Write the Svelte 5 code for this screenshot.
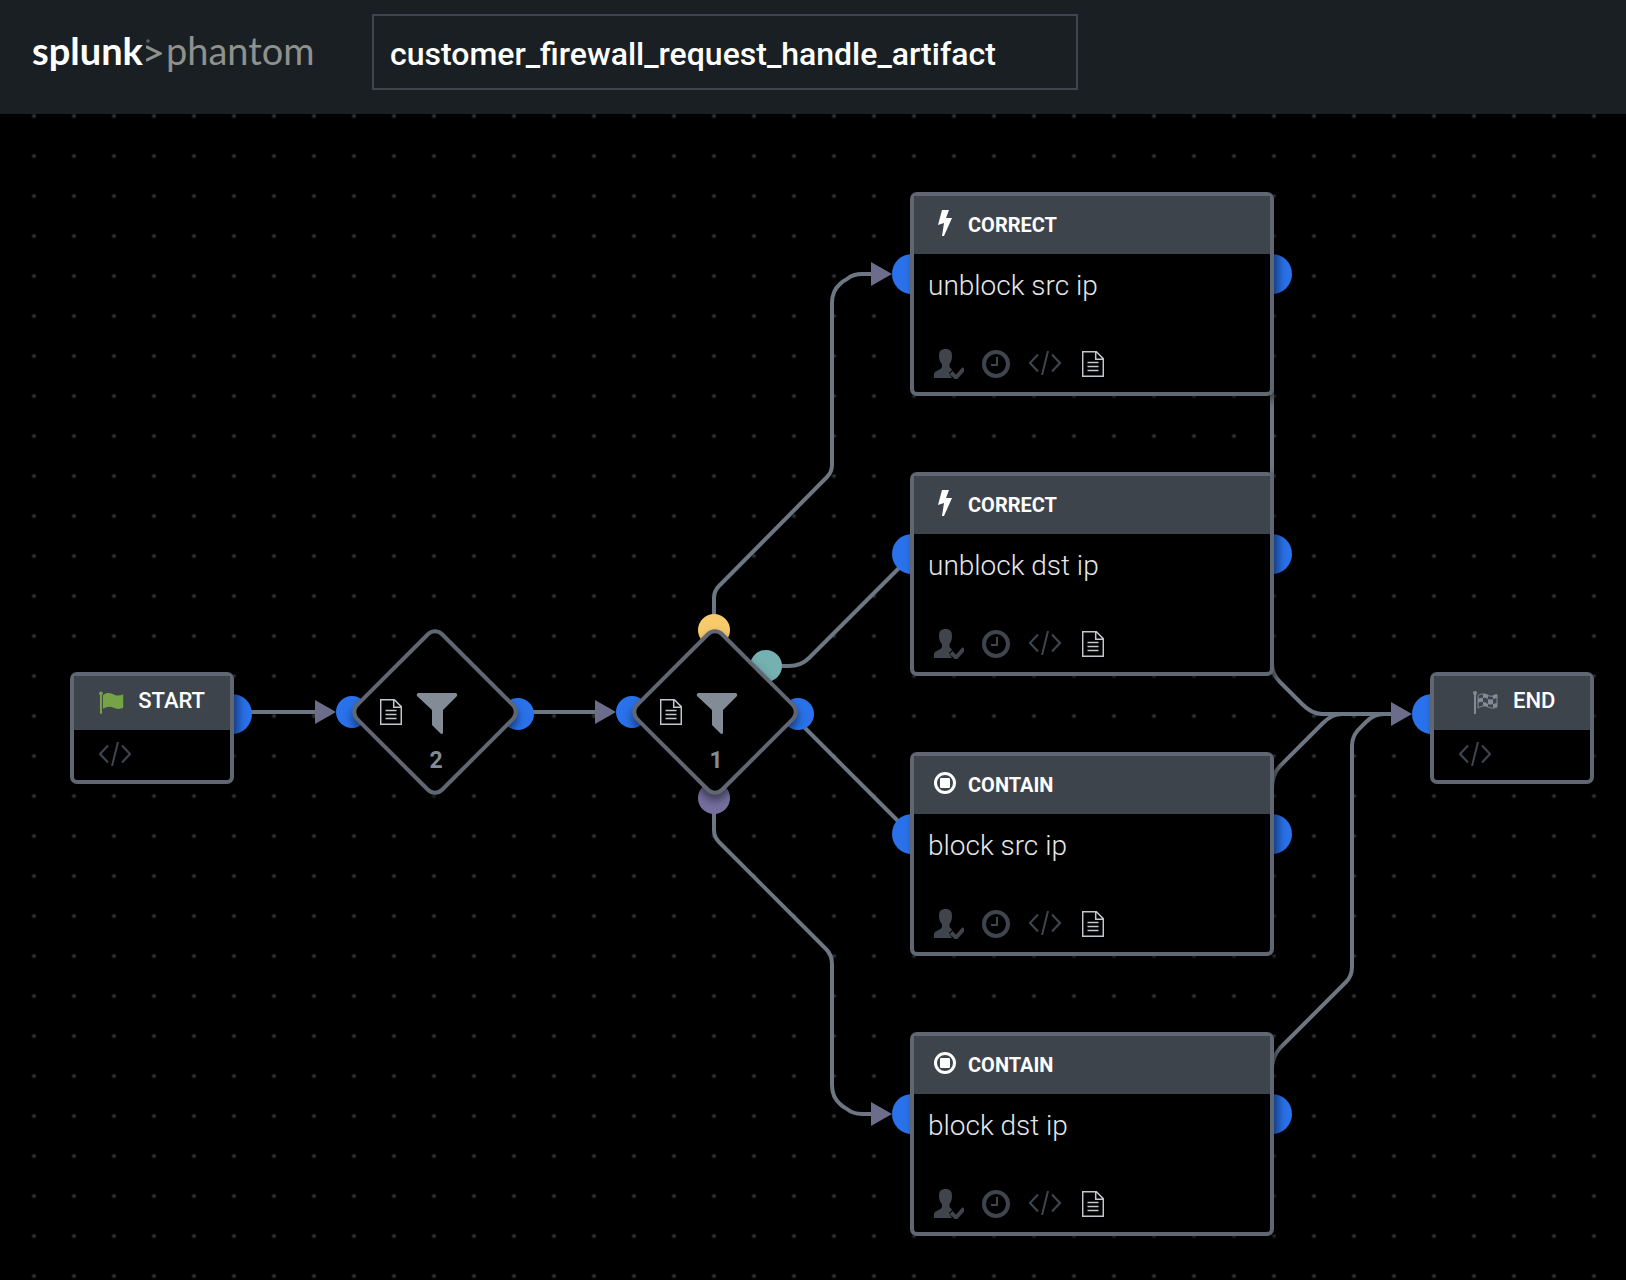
<script>
  const cards = [
    { top: 78, kind: 'CORRECT', text: 'unblock src ip', icon: 'bolt' },
    { top: 358, kind: 'CORRECT', text: 'unblock dst ip', icon: 'bolt' },
    { top: 638, kind: 'CONTAIN', text: 'block src ip', icon: 'stop' },
    { top: 918, kind: 'CONTAIN', text: 'block dst ip', icon: 'stop' }
  ];
  const filters = [
    { left: 373, label: '2' },
    { left: 653, label: '1' }
  ];
  const ports = [
    { x: 232, y: 600, r: 20, c: 'blue' },
    { x: 352, y: 598, r: 16, c: 'blue' },
    { x: 518, y: 600, r: 16, c: 'blue' },
    { x: 632, y: 598, r: 16, c: 'blue' },
    { x: 798, y: 600, r: 16, c: 'blue' },
    { x: 714, y: 516, r: 16, c: 'yellow' },
    { x: 766, y: 552, r: 16, c: 'teal' },
    { x: 714, y: 684, r: 16, c: 'purple' },
    { x: 1432, y: 600, r: 20, c: 'blue' },
    ...cards.flatMap((k) => [
      { x: 912, y: k.top + 82, r: 20, c: 'blue' },
      { x: 1272, y: k.top + 82, r: 20, c: 'blue' }
    ])
  ];
  const edges = [
    'M232 598H320',
    'M518 598H600',
    'M714 516V484Q714 477 719 472L827 363Q832 358 832 351V189Q832 177 840 170Q843 167 847 165Q853 160 862 160H876',
    'M766 552H789Q801 552 809 544L912 441',
    'M798 607L912 721',
    'M714 684V716Q714 723 719 728L826 835Q832 841 832 850V971Q832 983 840 990Q843 993 847 995Q853 1000 862 1000H876',
    'M1272 160V550Q1272 560 1280 568L1302 590Q1312 600 1322 600H1396',
    'M1272 680Q1271 661 1280 652L1323 609Q1332 600 1342 600',
    'M1272 960Q1271 944 1280 934L1346 868Q1352 862 1352 853V632Q1352 623 1358 616L1366 608Q1374 600 1384 600'
  ];
  const arrows = [
    [336, 598],
    [616, 598],
    [892, 160],
    [892, 1000],
    [1412, 600]
  ];
</script>

{#snippet code()}
  <svg class="code" width="32" height="24" viewBox="0 0 32 24" aria-hidden="true">
    <path d="M9 3.500 1 12l8 8.500M23 3.500l8 8.500-8 8.500M19 0l-6 24" />
  </svg>
{/snippet}

{#snippet doc()}
  <svg class="doc" width="22" height="26" viewBox="0 0 22 26" aria-hidden="true">
    <path d="M.7.7h13.6l7 7v17.6H.7zM13.7.7v7.6h7.6M5.500 11.500h11M5.500 15.500h11M5.500 19.500h11" />
  </svg>
{/snippet}

<div class="app">
  <header>
    <a class="logo" href="#home"><b>splunk</b><svg width="16" height="26" viewBox="0 0 16 26" aria-hidden="true"><path d="M0 9.500 14 16.500 0 23.500" /><circle cx="2" cy="4" r="1.800" /></svg><span>phantom</span></a>
    <input aria-label="Playbook name" value="customer_firewall_request_handle_artifact" spellcheck="false" />
  </header>

  <main>
    <svg class="wires" aria-hidden="true">
      {#each edges as d}<path {d} />{/each}
      {#each ports as p}<circle class={p.c} cx={p.x} cy={p.y} r={p.r} />{/each}
      {#each arrows as [x, y]}<polygon points="{x},{y} {x - 21},{y - 12} {x - 21},{y + 12}" />{/each}
    </svg>

    <section class="node terminal start">
      <h2>
        <svg width="26" height="24" viewBox="0 0 26 24" aria-hidden="true">
          <circle cx="2" cy="2" r="2" /><path d="M1 3h2v20H1zM4 4C9 0 13 2 17 4q4 1 8-1v14c-4 2-7 1-10 0-4-2-7-1-11 1z" />
        </svg>
        START
      </h2>
      <div class="body">{@render code()}</div>
    </section>

    {#each filters as f}
      <section class="filter" style:left="{f.left}px">
        <div class="diamond"></div>
        <div class="inner">
          {@render doc()}
          <svg class="funnel" width="42" height="42" viewBox="0 0 42 42" aria-hidden="true">
            <path d="M2 0h38q2 1 1 3L27 17v23q-1 2-3 0l-8-8V17L1 3Q0 1 2 0z" />
          </svg>
          <strong>{f.label}</strong>
        </div>
      </section>
    {/each}

    {#each cards as card}
      <section class="node card" style:top="{card.top}px">
        <h2>
          {#if card.icon === 'bolt'}
            <svg width="22" height="26" viewBox="0 0 22 26" aria-hidden="true"><path d="M8 0h7l-3 8h6L10 26H8l2-13-6 2z" /></svg>
          {:else}
            <svg width="22" height="22" viewBox="0 0 22 22" aria-hidden="true"><circle class="ring" cx="11" cy="11" r="9.500" /><rect x="6" y="6" width="10" height="10" rx="1" /></svg>
          {/if}
          {card.kind}
        </h2>
        <p>{card.text}</p>
        <div class="tools">
          <svg class="user" width="30" height="30" viewBox="0 0 30 30" aria-hidden="true">
            <path d="M5 7C5 2 7 0 11.500 0S18 2 18 7c0 4-1 6-2.500 8v3c1 1 2.500 2 2.500 3l-3 3 3 5H0v-4c0-3 7-4 8-7v-3C6 13 5 11 5 7z" />
            <path class="tick" d="M17 23.500l5 5 8-9" />
          </svg>
          <svg class="clock" width="28" height="28" viewBox="0 0 28 28" aria-hidden="true">
            <circle cx="14" cy="14" r="12" /><path d="M15 7v8H9" />
          </svg>
          {@render code()}
          {@render doc()}
        </div>
      </section>
    {/each}

    <section class="node terminal end">
      <h2>
        <svg width="26" height="24" viewBox="0 0 26 24" aria-hidden="true">
          <circle cx="2" cy="2" r="2" /><path d="M1 3h2v20H1z" />
          <path class="flag" d="M5 4.500c5-3 8-1 11 .5q4 1 8-1v12c-4 2-6 1-9 0-4-2-6-1-10 1z" />
          <path d="M10 3q3-1 5 1v4q-3-2-5-1zM5 8q3-2 5-1v4q-2-1-5 1zM15 8q3 1 5 0v5q-3 1-5 0zM10 11q3 0 5 2v3q-3-2-5-1zM20 4l4-1v4l-4 1zM20 13l4-1v4l-4 1z" />
        </svg>
        END
      </h2>
      <div class="body">{@render code()}</div>
    </section>
  </main>
</div>

<style>
  :global(body) {
    margin: 0;
    background: #000;
  }
  .app {
    display: flex;
    flex-direction: column;
    min-height: 100vh;
    font-family: Roboto, sans-serif;
    color: #fff;
  }
  header {
    display: flex;
    align-items: flex-start;
    box-sizing: border-box;
    height: 114px;
    padding: 14px 32px;
    background: #1a1f23;
  }
  .logo {
    display: flex;
    align-items: center;
    width: 340px;
    height: 72px;
    color: #fff;
    font: 38px/44px Lato, sans-serif;
    text-decoration: none;
  }
  .logo span {
    color: #8f918d;
  }
  .logo svg {
    margin: 0 4px 0 3px;
    fill: #5b5f61;
  }
  .logo path {
    fill: none;
    stroke: #8f918d;
    stroke-width: 3;
  }
  input {
    box-sizing: border-box;
    flex: 0 1 706px;
    min-width: 0;
    height: 76px;
    padding: 4px 16px 0;
    border: 2px solid #3f444d;
    border-radius: 0;
    background: transparent;
    color: #fff;
    font: 500 32px/40px Roboto, sans-serif;
    outline: none;
  }
  main {
    position: relative;
    flex: 1;
    min-height: 1166px;
    overflow: hidden;
    background:
      radial-gradient(circle at 34px 2px, #393c3f 0, #2a2d2f 1px, transparent 3px) 0 0 / 40px 40px,
      #000;
  }
  .wires {
    position: absolute;
    inset: 0;
    width: 100%;
    height: 100%;
  }
  .wires path {
    fill: none;
    stroke: #6c7783;
    stroke-width: 4;
  }
  .wires polygon {
    fill: #6c6d8a;
  }
  .blue {
    fill: #2a72eb;
  }
  .yellow {
    fill: #f7cb6c;
  }
  .teal {
    fill: #75b1b1;
  }
  .purple {
    fill: #7670a0;
  }
  .node {
    position: absolute;
    box-sizing: border-box;
    border: 4px solid #606773;
    border-radius: 7px;
    background: #000;
    box-shadow: 4px 4px 10px rgba(0, 0, 0, 0.5);
  }
  h2 {
    display: flex;
    align-items: center;
    box-sizing: border-box;
    margin: 0;
    background: #3e444c;
    fill: #fff;
  }
  .card {
    left: 910px;
    width: 364px;
    height: 204px;
  }
  .card h2 {
    gap: 12px;
    height: 58px;
    padding: 0 20px;
    font-size: 20px;
    font-weight: 700;
  }
  .card h2 svg {
    margin-bottom: 4px;
  }
  .ring {
    fill: none;
    stroke: #fff;
    stroke-width: 3;
  }
  p {
    margin: 0;
    padding: 15px 14px 0;
    color: #e6e7ea;
    font-size: 28px;
    font-weight: 300;
    line-height: 34px;
  }
  .tools {
    display: flex;
    align-items: center;
    height: 30px;
    margin-top: 46px;
    padding-left: 20px;
  }
  .tools .clock {
    margin: 0 19px 0 18px;
  }
  .tools .code {
    margin-bottom: 3px;
  }
  .tools .doc {
    margin-left: 21px;
  }
  .user {
    fill: #3f444d;
  }
  .tick {
    fill: none;
    stroke: #3f444d;
    stroke-width: 4;
  }
  .clock {
    fill: none;
    stroke: #3f444d;
    stroke-width: 4;
  }
  .clock path {
    stroke-width: 2;
  }
  .code {
    fill: none;
    stroke: #40464e;
    stroke-width: 2;
  }
  .doc {
    fill: none;
    stroke: #c3c7ce;
    stroke-width: 1.500;
  }
  .terminal {
    top: 558px;
    width: 164px;
    height: 112px;
  }
  .terminal h2 {
    gap: 14px;
    height: 54px;
    padding: 0 25px 5px;
    font-size: 22px;
    font-weight: 500;
  }
  .terminal h2 svg {
    margin-top: 4px;
  }
  .body {
    padding: 12px 25px;
  }
  .start {
    left: 70px;
  }
  .start svg {
    fill: #74a446;
  }
  .end {
    left: 1430px;
  }
  .end h2 {
    padding-left: 39px;
  }
  .end h2 svg {
    fill: #838c96;
  }
  .flag {
    fill: none;
    stroke: #838c96;
  }
  .start .code,
  .end .code {
    fill: none;
  }
  .filter {
    position: absolute;
    top: 536px;
    width: 124px;
    height: 124px;
  }
  .diamond {
    position: absolute;
    inset: 0;
    box-sizing: border-box;
    border: 4px solid #606773;
    border-radius: 12px;
    background: #000;
    box-shadow: 4px 4px 10px rgba(0, 0, 0, 0.5);
    transform: rotate(45deg);
  }
  .inner {
    position: relative;
    display: grid;
    grid-template-columns: 22px 40px;
    column-gap: 14px;
    align-items: center;
    padding: 43px 0 0 7px;
  }
  .inner .doc {
    margin-bottom: 4px;
  }
  .funnel {
    fill: #838c96;
  }
  strong {
    grid-column: 2;
    margin-top: 12px;
    color: #838c96;
    font-size: 23px;
    line-height: 28px;
    text-align: center;
  }
</style>
